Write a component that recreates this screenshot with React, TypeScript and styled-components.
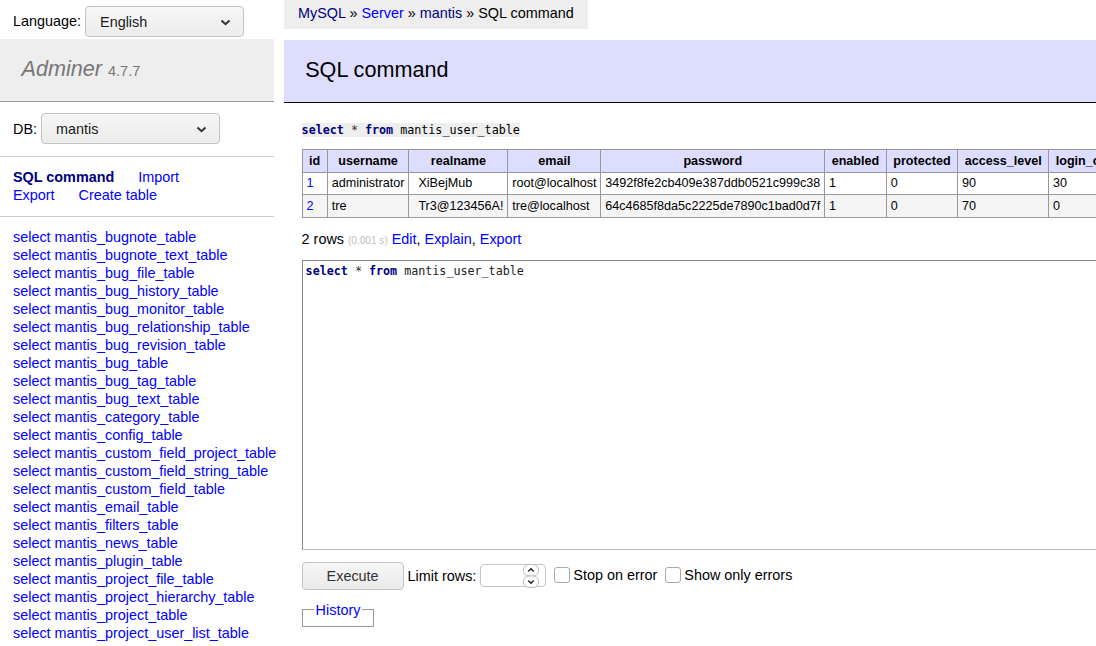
import styled, { createGlobalStyle } from "styled-components";

const GlobalStyle = createGlobalStyle`
  html, body {
    margin: 0;
    overflow: hidden;
  }
  body {
    font: 14.4px/1.25 "Liberation Sans", Arial, sans-serif;
    color: #000;
    background: #fff;
  }
  a {
    color: blue;
    text-decoration: none;
  }
`;

const tables = [
  "mantis_bugnote_table",
  "mantis_bugnote_text_table",
  "mantis_bug_file_table",
  "mantis_bug_history_table",
  "mantis_bug_monitor_table",
  "mantis_bug_relationship_table",
  "mantis_bug_revision_table",
  "mantis_bug_table",
  "mantis_bug_tag_table",
  "mantis_bug_text_table",
  "mantis_category_table",
  "mantis_config_table",
  "mantis_custom_field_project_table",
  "mantis_custom_field_string_table",
  "mantis_custom_field_table",
  "mantis_email_table",
  "mantis_filters_table",
  "mantis_news_table",
  "mantis_plugin_table",
  "mantis_project_file_table",
  "mantis_project_hierarchy_table",
  "mantis_project_table",
  "mantis_project_user_list_table",
];

const columns = [
  "id",
  "username",
  "realname",
  "email",
  "password",
  "enabled",
  "protected",
  "access_level",
  "login_count",
  "lost_password_request_count",
];

const rows = [
  ["1", "administrator", "XiBejMub", "root@localhost", "3492f8fe2cb409e387ddb0521c999c38", "1", "0", "90", "30", "0"],
  ["2", "tre", "Tr3@123456A!", "tre@localhost", "64c4685f8da5c2225de7890c1bad0d7f", "1", "0", "70", "0", "0"],
];

function Chevron() {
  return (
    <ChevronIcon width="11" height="7" viewBox="0 0 11 7">
      <path d="M1.5 1.5 L5.5 5.2 L9.5 1.5" fill="none" stroke="#333" strokeWidth="2" />
    </ChevronIcon>
  );
}

function FakeSelect({ value, width }: { value: string; width: number }) {
  return (
    <SelectBox $width={width}>
      {value}
      <Chevron />
    </SelectBox>
  );
}

function SqlLine() {
  return (
    <>
      <Kw>select</Kw> <Op>*</Op> <Kw>from</Kw> mantis_user_table
    </>
  );
}

export default function App() {
  return (
    <>
      <GlobalStyle />
      <Page>
        <Sidebar>
          <LangBar>
            Language: <FakeSelect value="English" width={159} />
          </LangBar>
          <Logo>
            <LogoLink href="#">Adminer</LogoLink> <Version>4.7.7</Version>
          </Logo>
          <MenuBlock>
            <DbLine>
              DB: <FakeSelect value="mantis" width={179} />
            </DbLine>
          </MenuBlock>
          <MenuBlock>
            <MenuLink href="#" $active>
              SQL command
            </MenuLink>{" "}
            <MenuLink href="#">Import</MenuLink>
            <br />
            <MenuLink href="#">Export</MenuLink> <MenuLink href="#">Create table</MenuLink>
          </MenuBlock>
          <TableList>
            {tables.map((t) => (
              <li key={t}>
                <a href="#">select</a> <a href="#">{t}</a>
              </li>
            ))}
          </TableList>
        </Sidebar>

        <Main>
          <Breadcrumb>
            <Crumb href="#" $visited>
              MySQL
            </Crumb>{" "}
            » <Crumb href="#">Server</Crumb> »{" "}
            <Crumb href="#" $visited>
              mantis
            </Crumb>{" "}
            » SQL command
          </Breadcrumb>
          <Title>SQL command</Title>
          <Content>
            <QueryPre>
              <Code>
                <SqlLine />
              </Code>
            </QueryPre>
            <Results>
              <thead>
                <tr>
                  {columns.map((c) => (
                    <th key={c}>{c}</th>
                  ))}
                </tr>
              </thead>
              <tbody>
                {rows.map((r) => (
                  <tr key={r[0]}>
                    {r.map((v, i) => (
                      <Cell key={i} $wide={i === 2}>
                        {i === 0 ? <a href="#">{v}</a> : v}
                      </Cell>
                    ))}
                  </tr>
                ))}
              </tbody>
            </Results>
            <Summary>
              2 rows <Time>(0.001 s)</Time> <a href="#">Edit</a>, <a href="#">Explain</a>,{" "}
              <a href="#">Export</a>
            </Summary>
            <Editor>
              <SqlLine />
            </Editor>
            <Controls>
              <ExecButton type="button">Execute</ExecButton>
              <span>Limit rows:</span>
              <NumberBox>
                <Spinner width="16" height="24" viewBox="0 0 16 24">
                  <rect x="0.5" y="0.5" width="15" height="11.5" rx="5.5" fill="#fff" stroke="#bbb" />
                  <rect x="0.5" y="12" width="15" height="11.5" rx="5.5" fill="#fff" stroke="#bbb" />
                  <path d="M5.2 7.5 L8 4.8 L10.8 7.5" fill="none" stroke="#222" strokeWidth="1.4" />
                  <path d="M5.2 16.5 L8 19.2 L10.8 16.5" fill="none" stroke="#222" strokeWidth="1.4" />
                </Spinner>
              </NumberBox>
              <CheckLabel>
                <Box />
                Stop on error
              </CheckLabel>
              <CheckLabel>
                <Box />
                Show only errors
              </CheckLabel>
            </Controls>
            <History>
              <legend>
                <a href="#">History</a>
              </legend>
            </History>
          </Content>
        </Main>
      </Page>
    </>
  );
}

const Page = styled.div`
  display: flex;
  align-items: flex-start;
`;

const Sidebar = styled.nav`
  flex: none;
  width: 273.6px;
`;

const LangBar = styled.div`
  height: 39px;
  box-sizing: border-box;
  padding: 6px 14.4px 0 13px;
  display: flex;
  align-items: flex-start;
  gap: 4px;
  line-height: 31px;
`;

const SelectBox = styled.div<{ $width: number }>`
  position: relative;
  width: ${(p) => p.$width}px;
  height: 31px;
  box-sizing: border-box;
  display: flex;
  align-items: center;
  padding-left: 14px;
  border: 1px solid #c2c2c2;
  border-radius: 4px;
  background: linear-gradient(#f6f6f6, #ececec);
  color: #1a1a1a;
  font-size: 14.4px;
  line-height: 1.25;
`;

const ChevronIcon = styled.svg`
  position: absolute;
  right: 12px;
  top: 12px;
`;

const Logo = styled.h1`
  margin: 0;
  padding: 17.28px 21.6px;
  font-size: 21.6px;
  font-weight: normal;
  line-height: 1.25;
  color: #777;
  background: #eee;
  border-bottom: 1px solid #999;
`;

const LogoLink = styled.a`
  && {
    color: #777;
  }
  font-style: italic;
`;

const Version = styled.span`
  font-size: 67%;
  color: #777;
`;

const MenuBlock = styled.p`
  margin: 0;
  padding: 11.52px 14.4px 11.52px 13px;
  border-bottom: 1px solid #ccc;
`;

const DbLine = styled.span`
  display: flex;
  align-items: center;
  gap: 4px;
`;

const MenuLink = styled.a<{ $active?: boolean }>`
  white-space: nowrap;
  margin-right: 20px;
  font-weight: ${(p) => (p.$active ? "bold" : "normal")};
  && {
    color: ${(p) => (p.$active ? "navy" : "blue")};
  }
`;

const TableList = styled.ul`
  list-style: none;
  margin: 0;
  padding: 11.52px 14.4px 11.52px 13px;
  white-space: nowrap;
  li {
    line-height: 18px;
  }
`;

const Main = styled.main`
  flex: 1;
  min-width: 0;
  margin-left: 10px;
`;

const Breadcrumb = styled.div`
  display: inline-block;
  white-space: nowrap;
  height: 29px;
  line-height: 27px;
  padding: 0 14.4px;
  background: #eee;
  vertical-align: top;
`;

const Crumb = styled.a<{ $visited?: boolean }>`
  && {
    color: ${(p) => (p.$visited ? "navy" : "blue")};
  }
`;

const Title = styled.h2`
  margin: 11px 0 20px;
  padding: 17.28px 21.6px;
  font-size: 21.6px;
  font-weight: normal;
  line-height: 1.25;
  color: #000;
  background: #ddf;
  border-bottom: 1px solid #000;
`;

const Content = styled.div`
  padding-left: 18px;
`;

const monoText = `
  font-family: "DejaVu Sans Mono", "Liberation Mono", monospace;
  font-size: 11.7px;
  line-height: 1.25;
`;

const QueryPre = styled.pre`
  margin: 0 0 12px;
  ${monoText}
`;

const Code = styled.code`
  background: #eee;
  font: inherit;
`;

const Kw = styled.span`
  color: navy;
  font-weight: bold;
`;

const Op = styled.span`
  color: #333;
`;

const Results = styled.table`
  border-collapse: collapse;
  font-size: 12.6px;
  line-height: 1.3;
  margin: 0;
  white-space: nowrap;
  th {
    border: 1px solid #999;
    background: #ddf;
    text-align: center;
    padding: 2.6px 6.5px;
  }
  tbody tr:nth-child(2n) {
    background: #f5f5f5;
  }
`;

const Cell = styled.td<{ $wide?: boolean }>`
  border: 1px solid #999;
  padding: 2.6px 3.9px 2.6px ${(p) => (p.$wide ? "9px" : "3.9px")};
  text-align: left;
`;

const Summary = styled.p`
  margin: 12px 0 10px;
  line-height: 18px;
`;

const Time = styled.span`
  color: silver;
  font-size: 70%;
`;

const Editor = styled.div`
  width: 840px;
  height: 290px;
  box-sizing: border-box;
  border: 1px solid #8a8a8a;
  border-right-color: #bbb;
  border-bottom-color: #bbb;
  padding: 3px 3px;
  white-space: pre;
  color: #222;
  ${monoText}
`;

const Controls = styled.div`
  display: flex;
  align-items: center;
  margin-top: 12px;
  gap: 4px;
`;

const ExecButton = styled.button`
  width: 102px;
  height: 28px;
  border: 1px solid #c4c4c4;
  border-radius: 4px;
  background: linear-gradient(#f6f6f6, #ebebeb);
  color: #333;
  font: 14.4px "Liberation Sans", Arial, sans-serif;
  padding: 0;
`;

const NumberBox = styled.div`
  width: 66px;
  height: 23px;
  box-sizing: border-box;
  border: 1px solid #c4c4c4;
  border-radius: 4px;
  display: flex;
  align-items: center;
  justify-content: flex-end;
  padding-right: 6px;
  margin-right: 4px;
`;

const Spinner = styled.svg`
  display: block;
`;

const CheckLabel = styled.label`
  display: inline-flex;
  align-items: center;
  gap: 3px;
  margin-right: 4px;
  margin-top: -2px;
`;

const Box = styled.span`
  width: 14px;
  height: 14px;
  border: 1px solid #a8a8a8;
  border-radius: 3px;
  background: #fff;
`;

const History = styled.fieldset`
  display: inline-block;
  margin: 11px 0 0;
  padding: 0 11px 7.2px;
  min-width: 0;
  height: 14px;
  border: 1px solid #999;
  legend {
    padding: 0 2px;
    line-height: 18px;
  }
`;
